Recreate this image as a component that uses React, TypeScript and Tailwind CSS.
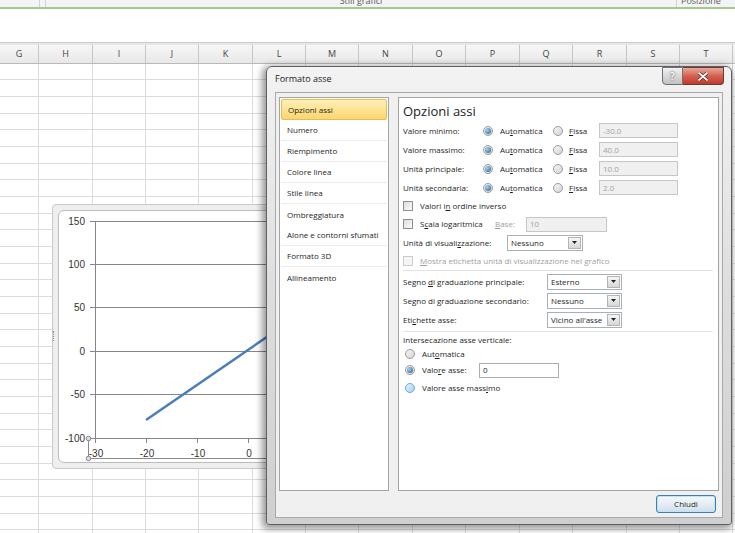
import React from 'react';

const cols = [
  { l: 'G', w: 'w-[39px]' },
  { l: 'H', w: 'w-[54px]' },
  { l: 'I', w: 'w-[53px]' },
  { l: 'J', w: 'w-[53px]' },
  { l: 'K', w: 'w-[54px]' },
  { l: 'L', w: 'w-[53px]' },
  { l: 'M', w: 'w-[53px]' },
  { l: 'N', w: 'w-[54px]' },
  { l: 'O', w: 'w-[53px]' },
  { l: 'P', w: 'w-[54px]' },
  { l: 'Q', w: 'w-[53px]' },
  { l: 'R', w: 'w-[54px]' },
  { l: 'S', w: 'w-[53px]' },
  { l: 'T', w: 'w-[53px]' },
];
const rowH = ['h-[16px]', 'h-[17px]', 'h-[17px]'];

const listItems = [
  { t: 'Opzioni assi', sel: true },
  { t: 'Numero' },
  { t: 'Riempimento' },
  { t: 'Colore linea' },
  { t: 'Stile linea' },
  { t: 'Ombreggiatura', noSep: true },
  { t: 'Alone e contorni sfumati' },
  { t: 'Formato 3D' },
  { t: 'Allineamento', noSep: true },
];

function U({ children }: { children: React.ReactNode }) {
  return <span className="underline underline-offset-[1px]">{children}</span>;
}

function Radio({ on, hover }: { on?: boolean; hover?: boolean }) {
  return (
    <span
      className={`flex h-[10px] w-[10px] shrink-0 items-center justify-center rounded-full border ${
        hover
          ? 'border-[#6ea8d8] bg-linear-to-br from-[#e6f4fd] to-[#a6d0f0]'
          : 'border-[#9b9b9b] bg-linear-to-br from-[#f6f6f6] to-[#d4d4d4]'
      }`}
    >
      {on && <span className="h-[6px] w-[6px] rounded-full bg-[radial-gradient(circle_at_35%_35%,#a9d2f2,#1d5c95)]" />}
    </span>
  );
}

function Check({ disabled }: { disabled?: boolean }) {
  return (
    <span
      className={`h-[10px] w-[10px] shrink-0 border ${
        disabled ? 'border-[#cdcdcd] bg-[#f5f5f5]' : 'border-[#8e8f8f] bg-linear-to-br from-[#dcdcdc] to-[#fbfbfb]'
      }`}
    />
  );
}

function Field({ value, disabled, w }: { value: string; disabled?: boolean; w: string }) {
  return (
    <div
      className={`flex h-[15px] items-center border pl-[3px] ${w} ${
        disabled ? 'border-[#c6c6c6] bg-[#f0f0f0] text-[#a3a3a3]' : 'border-[#abadb3] bg-white text-[#1e1e1e]'
      }`}
    >
      {value}
    </div>
  );
}

function Select({ value, w }: { value: string; w: string }) {
  return (
    <div className={`flex h-[16px] items-center border border-[#a9b0b8] bg-white pl-[3px] ${w}`}>
      <span className="flex-1 overflow-hidden whitespace-nowrap">{value}</span>
      <span className="mr-[1px] flex h-[12px] w-[13px] items-center justify-center border border-[#b4b4b4] bg-linear-to-b from-[#f6f6f6] to-[#d6d6d6]">
        <svg width="5" height="3" viewBox="0 0 5 3">
          <path d="M0 0h5L2.5 3z" fill="#222" />
        </svg>
      </span>
    </div>
  );
}

function AxisRow({ label, min }: { label: React.ReactNode; min: string }) {
  return (
    <div className="flex h-[19px] items-center">
      <span className="w-[80px] shrink-0">{label}</span>
      <div className="flex w-[70px] items-center gap-[7px]">
        <Radio on />
        <span>
          Au<U>t</U>omatica
        </span>
      </div>
      <div className="flex w-[46px] items-center gap-[6px]">
        <Radio />
        <span>
          <U>F</U>issa
        </span>
      </div>
      <Field value={min} disabled w="w-[79px]" />
    </div>
  );
}

function Chart() {
  const grid = [221, 264, 307, 351, 394, 438];
  const labels = ['150', '100', '50', '0', '-50', '-100'];
  const xs = [
    { x: 95, t: '-30' },
    { x: 146, t: '-20' },
    { x: 197, t: '-10' },
    { x: 248, t: '0' },
    { x: 299, t: '10' },
  ];
  return (
    <div className="absolute left-[52px] top-[204px] h-[265px] w-[360px] rounded-[4px] border border-[#c9c9c9] bg-[#eeeeee] p-[5px]">
      <div className="relative h-full w-full overflow-hidden rounded-[6px] border border-[#bdbdbd] bg-white">
        <svg className="absolute inset-0" width="360" height="260">
          <g transform="translate(-59,-211)" fontFamily="'Liberation Sans', Arial, sans-serif" fontSize="10" fill="#333">
            {grid.map((y, i) => (
              <g key={y}>
                <line x1="90" x2="420" y1={y + 0.5} y2={y + 0.5} stroke="#868686" />
                <text x="85" y={y + 4} textAnchor="end">
                  {labels[i]}
                </text>
              </g>
            ))}
            <line x1="95.5" x2="95.5" y1="221" y2="443" stroke="#868686" />
            {xs.map(d => (
              <g key={d.t}>
                <line x1={d.x + 0.5} x2={d.x + 0.5} y1="438" y2="443" stroke="#868686" />
                <text x={d.x + 1} y="457" textAnchor="middle">
                  {d.t}
                </text>
              </g>
            ))}
            <line x1="146" y1="420" x2="360" y2="273" stroke="#4a7ebb" strokeWidth="2.5" />
            <line x1="88.5" x2="88.5" y1="438" y2="458" stroke="#8a8a8a" />
            <line x1="88" x2="420" y1="458.5" y2="458.5" stroke="#8a8a8a" />
            <circle cx="88.5" cy="438.5" r="2.3" fill="#dcdcdc" stroke="#8a8a8a" />
            <circle cx="88.5" cy="458.5" r="2.3" fill="#dcdcdc" stroke="#8a8a8a" />
          </g>
        </svg>
      </div>
      <div className="absolute left-[0px] top-[126px] h-[10px] border-l border-dotted border-[#8a8a8a]" />
    </div>
  );
}

function Dialog() {
  return (
    <div className="absolute left-[266px] top-[66px] flex h-[459px] w-[466px] flex-col rounded-t-[6px] rounded-b-[3px] border border-[#5d6066] bg-linear-to-b from-[#f3f3f3] via-[#dddddd] to-[#cfcfcf] px-[8px] pb-[6px] shadow-[-2px_2px_7px_2px_rgba(0,0,0,0.4)]">
      <div className="flex h-[25px] shrink-0 items-start justify-between">
        <span className="mt-[6px] text-[9px] leading-[12px] text-[#1b1b1b]">Formato asse</span>
        <div className="-mr-[1px] flex">
          <div className="flex h-[18px] w-[21px] items-center justify-center rounded-bl-[4px] border border-[#707070] bg-linear-to-b from-[#f2f2f2] via-[#d8d8d8] to-[#c2c2c2] text-[10px] font-bold text-[#fafafa] [text-shadow:0_0_2px_#333]">
            ?
          </div>
          <div className="flex h-[18px] w-[41px] items-center justify-center rounded-br-[4px] border border-l-0 border-[#6b3a34] bg-linear-to-b from-[#e9a898] via-[#d3604f] to-[#c0392b]">
            <svg width="10" height="9" viewBox="0 0 10 9">
              <path d="M1 1l8 7M9 1L1 8" stroke="#3a1a16" strokeWidth="3" strokeLinecap="round" />
              <path d="M1 1l8 7M9 1L1 8" stroke="#fff" strokeWidth="1.8" strokeLinecap="round" />
            </svg>
          </div>
        </div>
      </div>

      <div className="flex flex-1 flex-col border border-[#a9a9a9] bg-[#f0f0f0] px-[3px] pt-[4px] text-[8px] text-[#1e1e1e]">
        <div className="flex h-[394px] gap-[9px]">
          <div className="flex w-[110px] shrink-0 flex-col border border-[#a4a4a4] bg-white p-[1px]">
            {listItems.map(it => (
              <div
                key={it.t}
                className={`flex h-[21px] shrink-0 items-center pl-[6px] ${
                  it.sel
                    ? 'rounded-[2px] border border-[#e2bd5c] bg-linear-to-b from-[#fff0b5] to-[#fdd56d]'
                    : it.noSep
                    ? ''
                    : 'border-b border-[#ececec]'
                }`}
              >
                {it.t}
              </div>
            ))}
          </div>

          <div className="flex flex-1 flex-col border border-[#a4a4a4] bg-white pl-[4px] pr-[5px]">
            <div className="h-[23px] shrink-0 pt-[4px] text-[13px] leading-[19px] text-[#222]">Opzioni assi</div>
            <AxisRow label="Valore minimo:" min="-30.0" />
            <AxisRow label="Valore massimo:" min="40.0" />
            <AxisRow label="Unità principale:" min="10.0" />
            <AxisRow label="Unità secondaria:" min="2.0" />

            <div className="flex h-[18px] items-center gap-[7px]">
              <Check />
              <span>
                Valori i<U>n</U> ordine inverso
              </span>
            </div>
            <div className="flex h-[18px] items-center">
              <div className="flex w-[92px] items-center gap-[7px]">
                <Check />
                <span>
                  S<U>c</U>ala logaritmica
                </span>
              </div>
              <span className="w-[31px] text-[#a0a0a0]">
                <U>B</U>ase:
              </span>
              <Field value="10" disabled w="w-[81px]" />
            </div>
            <div className="flex h-[19px] items-center">
              <span className="w-[104px]">
                Unità di visuali<U>z</U>zazione:
              </span>
              <Select value="Nessuno" w="w-[76px]" />
            </div>
            <div className="flex h-[19px] items-center gap-[7px] border-b border-[#e3e3e3] pb-[1px] text-[#a0a0a0]">
              <Check disabled />
              <span>
                <U>M</U>ostra etichetta unità di visualizzazione nel grafico
              </span>
            </div>

            <div className="flex flex-col border-b border-[#e3e3e3] pb-[2px] pt-[1px]">
              <div className="flex h-[19px] items-center">
                <span className="w-[144px]">
                  Segno <U>d</U>i graduazione principale:
                </span>
                <Select value="Esterno" w="w-[75px]" />
              </div>
              <div className="flex h-[19px] items-center">
                <span className="w-[144px]">
                  Se<U>g</U>no di graduazione secondario:
                </span>
                <Select value="Nessuno" w="w-[75px]" />
              </div>
              <div className="flex h-[19px] items-center">
                <span className="w-[144px]">
                  Eti<U>c</U>hette asse:
                </span>
                <Select value="Vicino all'asse" w="w-[75px]" />
              </div>
            </div>

            <div className="flex h-[15px] items-center">Intersecazione asse verticale:</div>
            <div className="flex h-[14px] items-center gap-[7px] pl-[2px]">
              <Radio />
              <span>
                Aut<U>o</U>matica
              </span>
            </div>
            <div className="flex h-[18px] items-center pl-[2px]">
              <Radio on />
              <span className="ml-[7px] w-[57px]">
                Valo<U>r</U>e asse:
              </span>
              <Field value="0" w="w-[80px]" />
            </div>
            <div className="flex h-[17px] items-center gap-[7px] pl-[2px]">
              <Radio hover />
              <span>
                Valore asse mass<U>i</U>mo
              </span>
            </div>
          </div>
        </div>

        <div className="mt-[4px] flex justify-end pr-[3px]">
          <div className="flex h-[18px] w-[60px] items-center justify-center rounded-[3px] border border-[#3c7fb1] bg-linear-to-b from-[#f4f9fd] via-[#e6eef5] to-[#cfdde9] shadow-[inset_0_0_0_1px_#bfe3f8]">
            Chiudi
          </div>
        </div>
      </div>
    </div>
  );
}

export default function App() {
  const rows = Array.from({ length: 29 }, (_, i) => i);
  return (
    <div className="relative h-[533px] w-[735px] overflow-hidden bg-white font-['Open_Sans',sans-serif]">
      <div className="flex h-[9px] overflow-hidden border-b-2 border-[#a3c98f] bg-[#f3f4f6] text-[9px] leading-[9px] text-[#5a5a5a]">
        <div className="w-[40px] shrink-0 border-r border-[#cfd3d8]" />
        <div className="w-[6px] shrink-0 border-r border-[#cfd3d8]" />
        <div className="-mt-[4px] flex-1 text-center">Stili grafici</div>
        <div className="-mt-[4px] w-[59px] shrink-0 border-l border-[#cfd3d8] pl-[4px]">Posizione</div>
      </div>
      <div className="h-[33px]" />
      <div className="h-[3px] border-t border-[#cdcdcd] bg-[#e6e6e6]" />

      <div className="flex h-[19px] border-b border-[#b9b9b9] bg-linear-to-b from-[#f7f7f7] to-[#e8e8e8] text-[9px] text-[#444]">
        {cols.map(c => (
          <div key={c.l} className={`${c.w} flex shrink-0 items-center justify-center border-r border-[#c6c6c6]`}>
            {c.l}
          </div>
        ))}
        <div className="flex-1" />
      </div>

      {rows.map(r => (
        <div key={r} className={`flex ${rowH[r % 3]} border-b border-[#dadcdd]`}>
          {cols.map(c => (
            <div key={c.l} className={`${c.w} shrink-0 border-r border-[#dadcdd]`} />
          ))}
        </div>
      ))}

      <Chart />
      <Dialog />
    </div>
  );
}
